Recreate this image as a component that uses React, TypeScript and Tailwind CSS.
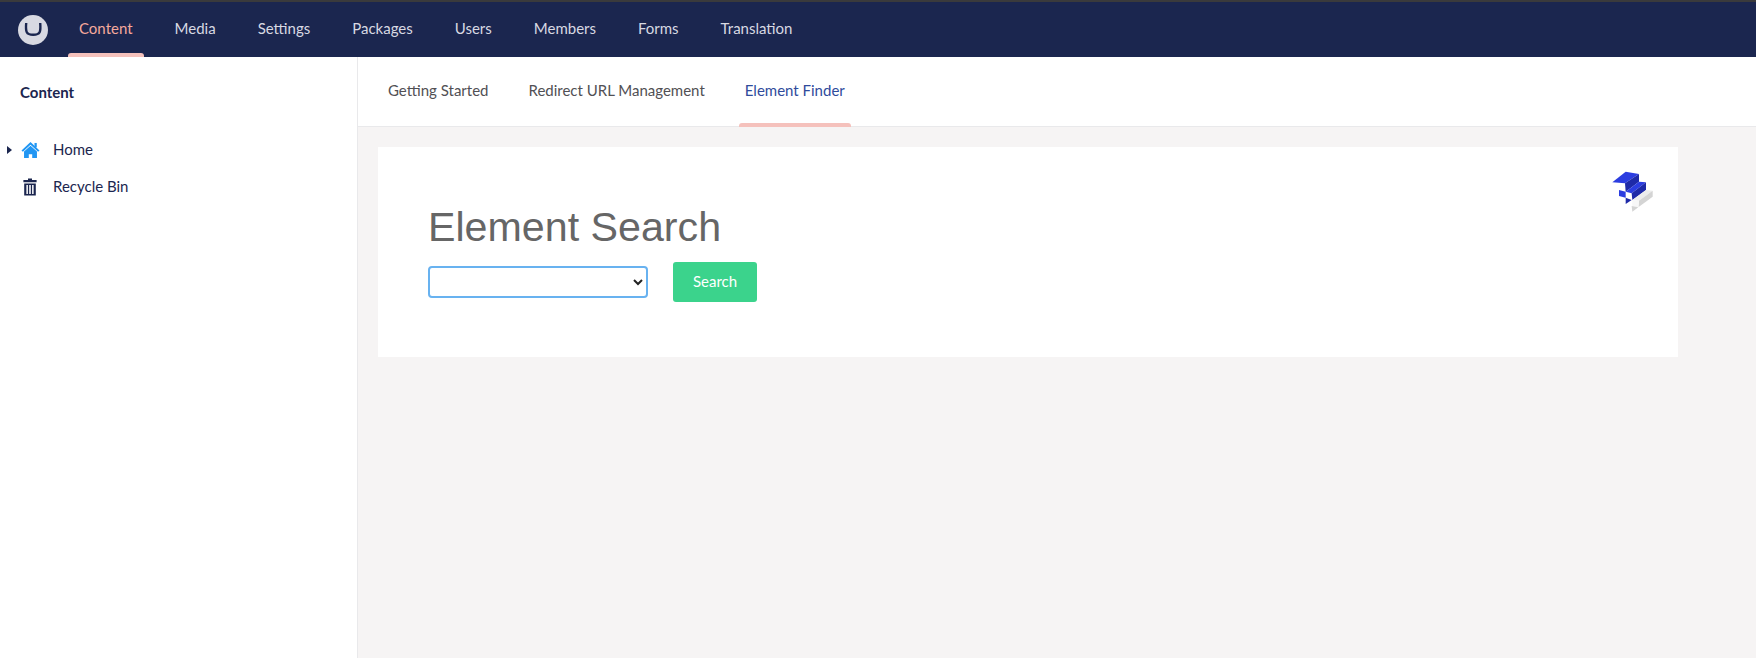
import React from "react";

const navItems = ["Content", "Media", "Settings", "Packages", "Users", "Members", "Forms", "Translation"];
const tabs = ["Getting Started", "Redirect URL Management", "Element Finder"];

function Logo() {
  return (
    <svg width="30" height="30" viewBox="0 0 30 30" className="block">
      <circle cx="15" cy="15" r="15" fill="#d8d9e2" />
      <path d="M8.2 8 C7.8 12.5 7.9 15.5 8.8 17.3 C9.8 19.3 12 19.8 15.2 19.8 C18.4 19.8 20.6 19.3 21.6 17.3 C22.5 15.5 22.6 12.5 22.2 8" fill="none" stroke="#1b264f" strokeWidth="2.4" />
    </svg>
  );
}

function HomeIcon() {
  return (
    <svg width="19" height="18" viewBox="0 0 20 18" className="block">
      <path d="M10 0.5 L19.5 9.6 L18 10.8 L10 3.4 L2 10.8 L0.5 9.6 Z" fill="#2196f3" />
      <path d="M3.2 10.6 L10 4.6 L16.8 10.6 V17.5 H11.8 V13.5 H8.2 V17.5 H3.2 Z" fill="#2196f3" />
      <rect x="14.2" y="1.6" width="2.4" height="4.6" fill="#2196f3" />
    </svg>
  );
}

function TrashIcon() {
  return (
    <svg width="14" height="18" viewBox="0 0 14 18" className="block">
      <path d="M5 0.5 H9 V2 H13.6 V4.2 H0.4 V2 H5 Z" fill="#1b264f" />
      <path d="M1.2 5.4 H12.8 V17.6 H1.2 Z M3.4 7 V16 H4.9 V7 Z M6.2 7 V16 H7.8 V7 Z M9.1 7 V16 H10.6 V7 Z" fill="#1b264f" fillRule="evenodd" />
    </svg>
  );
}

function StairsLogo() {
  return (
    <svg width="45" height="43.33" viewBox="120 60 135 130" className="block">
      <path d="M127 97 L167 65 L207 72 L165 100 Z" fill="#2b3de0" />
      <path d="M165 100 L207 72 V95 L167 125 Z" fill="#1e2aa8" />
      <path d="M167 125 L207 95 L228 97 L185 130 Z" fill="#2b3de0" />
      <path d="M185 130 L228 97 V120 L187 150 Z" fill="#1e2aa8" />
      <path d="M147 120 L167 125 V143 L147 138 Z" fill="#2b3de0" />
      <path d="M167 143 L185 150 L167 162 Z" fill="#1e2aa8" />
      <path d="M187 150 L228 120 L248 122 L207 152 Z" fill="#ececec" />
      <path d="M207 152 L248 122 V140 L205 172 Z" fill="#d4d4d4" />
      <path d="M187 150 L207 152 L205 172 L187 168 Z" fill="#f7f7f7" />
      <path d="M185 168 L205 172 L187 185 Z" fill="#d4d4d4" />
    </svg>
  );
}

export default function App() {
  return (
    <div className="flex h-[658px] w-[1756px] flex-col overflow-hidden bg-[#f6f4f4] font-['Lato','Open_Sans',sans-serif]">
      <div className="h-[2px] bg-[#3a3a3c]" />
      <header className="flex h-[55px] items-center bg-[#1b264f]">
        <div className="ml-[18px] mr-[20px]">
          <Logo />
        </div>
        <nav className="flex h-full gap-[20px]">
          {navItems.map((item, i) => (
            <div
              key={item}
              className={`relative flex h-full items-center px-[11px] pb-[2px] text-[15px] ${i === 0 ? "text-[#f5a99c]" : "text-[#d8d9e2]"}`}
            >
              {item}
              {i === 0 && <span className="absolute inset-x-0 bottom-0 h-[4px] rounded-t-[3px] bg-[#f5c1bc]" />}
            </div>
          ))}
        </nav>
      </header>

      <div className="flex min-h-0 flex-1">
        <aside className="w-[358px] shrink-0 border-r border-[#e9e9eb] bg-white text-[#1b264f]">
          <h2 className="ml-[20px] mt-[25px] text-[15px] leading-[20px] font-bold">Content</h2>
          <ul className="mt-[29px] text-[15px]">
            <li className="flex h-[37px] items-center">
              <span className="ml-[7px] mr-[8px] h-0 w-0 border-y-[4px] border-l-[5px] border-y-transparent border-l-[#1b264f]" />
              <span className="flex w-[20px] justify-center"><HomeIcon /></span>
              <span className="ml-[13px]">Home</span>
            </li>
            <li className="flex h-[37px] items-center pl-[20px]">
              <span className="flex w-[20px] justify-center"><TrashIcon /></span>
              <span className="ml-[13px]">Recycle Bin</span>
            </li>
          </ul>
        </aside>

        <main className="flex min-w-0 flex-1 flex-col">
          <div className="flex h-[70px] gap-[28px] border-b border-[#e9e9eb] bg-white pl-[24px]">
            {tabs.map((tab, i) => (
              <div
                key={tab}
                className={`relative flex h-full items-center px-[6px] pb-[3px] text-[15px] ${i === 2 ? "text-[#2f4b9c]" : "text-[#515054]"}`}
              >
                {tab}
                {i === 2 && <span className="absolute inset-x-0 -bottom-px h-[4px] rounded-t-[3px] bg-[#f5c1bc]" />}
              </div>
            ))}
          </div>

          <section className="relative ml-[20px] mt-[20px] h-[210px] w-[1300px] bg-white pl-[50px] pt-[57px]">
            <div className="absolute right-[23px] top-[23px]">
              <StairsLogo />
            </div>
            <h1 className="font-['Liberation_Sans',sans-serif] text-[41.2px] leading-[46px] font-normal text-[#666666]">
              Element Search
            </h1>
            <div className="mt-[12px] flex items-center gap-[25px]">
              <select className="h-[32px] w-[220px] rounded-[4px] border-2 border-[#68b2f0] bg-white text-[#222222] font-['Liberation_Sans',sans-serif] text-[13px] appearance-auto" defaultValue="">
                <option value=""></option>
              </select>
              <button className="flex h-[40px] w-[84px] items-center justify-center rounded-[3px] bg-[#3bd38c] pb-[2px] text-[15px] text-white">
                Search
              </button>
            </div>
          </section>
        </main>
      </div>
    </div>
  );
}
